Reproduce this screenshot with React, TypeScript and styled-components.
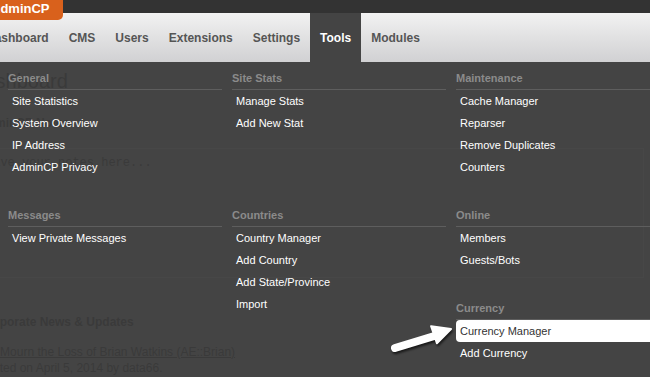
import React from 'react';
import styled, { createGlobalStyle } from 'styled-components';

interface MenuSection {
  title: string;
  links: string[];
}

const GlobalStyle = createGlobalStyle`
  html, body {
    margin: 0;
    padding: 0;
    overflow: hidden;
    background: #444;
  }
  body {
    font-family: "Liberation Sans", Arial, sans-serif;
  }
`;

const Page = styled.div`
  position: relative;
  width: 650px;
  height: 377px;
  overflow: hidden;
  background: #444;
`;

const TopBar = styled.div`
  display: flex;
  height: 13px;
  background: #333;
`;

const Brand = styled.div`
  position: relative;
  z-index: 2;
  align-self: flex-start;
  height: 20px;
  margin-left: -22px;
  padding: 0 13px;
  box-sizing: border-box;
  background: #d9611c;
  border-bottom-right-radius: 5px;
  color: #fff;
  font-size: 13px;
  font-weight: bold;
  line-height: 17px;
`;

const NavBar = styled.ul`
  display: flex;
  margin: 0 0 0 -24px;
  padding: 0;
  list-style: none;
  height: 49px;
  background: linear-gradient(to bottom, #f2f2f2 0%, #e1e1e2 50%, #d1d1d3 100%);
`;

const NavItem = styled.li<{ active?: boolean }>`
  padding: 0 10px;
  line-height: 50px;
  font-size: 12px;
  font-weight: bold;
  color: ${p => (p.active ? '#fff' : '#555')};
  background: ${p => (p.active ? '#444' : 'transparent')};
  white-space: nowrap;
`;

const Body = styled.div`
  position: relative;
  height: 315px;
`;

/* dashboard page that shows faintly through the open menu */
const Content = styled.div`
  margin-left: -21px;
  padding-top: 7px;
  color: #000;
`;

const PageTitle = styled.h1`
  margin: 0 0 0 -9px;
  font-size: 20px;
  font-weight: normal;
  line-height: 24px;
`;

const BlockTitle = styled.h3<{ gap: number }>`
  margin: ${p => p.gap}px 0 0;
  font-size: 12px;
  font-weight: bold;
  line-height: 16px;
  white-space: nowrap;
`;

const Notes = styled.textarea`
  display: block;
  box-sizing: border-box;
  margin-top: 17px;
  width: 665px;
  height: 130px;
  padding: 6px;
  border: 1px solid #5a5a5a;
  background: transparent;
  resize: none;
  font-family: "Liberation Mono", "Courier New", monospace;
  font-size: 12px;
  line-height: 16px;
  &::placeholder {
    color: #000;
  }
`;

const NewsLink = styled.a`
  display: block;
  margin-top: 14px;
  font-size: 12px;
  line-height: 16px;
  color: #000;
  text-decoration: underline;
  white-space: nowrap;
`;

const NewsMeta = styled.div`
  font-size: 12px;
  line-height: 16px;
  white-space: nowrap;
`;

const MegaMenu = styled.div`
  position: absolute;
  inset: 0;
  padding: 8px 0 0 8px;
  background: rgba(68, 68, 68, 0.85);
  display: grid;
  grid-template-columns: repeat(3, 214px);
  grid-auto-rows: min-content;
  align-content: start;
  column-gap: 10px;
`;

const Cell = styled.div`
  display: flex;
  flex-direction: column;
`;

const Section = styled.div`
  margin-bottom: 29px;
`;

const SectionTitle = styled.div`
  line-height: 16px;
  padding-bottom: 3px;
  border-bottom: 1px solid #5e5e5e;
  color: #8b8b8b;
  font-size: 11px;
  font-weight: bold;
`;

const LinkList = styled.ul`
  margin: 0;
  padding: 0;
  list-style: none;
`;

const LinkItem = styled.li<{ current?: boolean }>`
  padding: 0 4px;
  line-height: 22px;
  font-size: 11px;
  color: ${p => (p.current ? '#333' : '#fff')};
  background: ${p => (p.current ? '#fff' : 'transparent')};
  border-radius: 4px 0 0 4px;
  white-space: nowrap;
`;

const Pointer = styled.svg`
  position: absolute;
  left: 380px;
  top: 315px;
  width: 80px;
  height: 45px;
  pointer-events: none;
  filter: drop-shadow(1px 2px 1px rgba(0, 0, 0, 0.65));
`;

const navLinks = ['Dashboard', 'CMS', 'Users', 'Extensions', 'Settings', 'Tools', 'Modules'];

const columns: MenuSection[][] = [
  [{ title: 'General', links: ['Site Statistics', 'System Overview', 'IP Address', 'AdminCP Privacy'] }],
  [{ title: 'Site Stats', links: ['Manage Stats', 'Add New Stat'] }],
  [{ title: 'Maintenance', links: ['Cache Manager', 'Reparser', 'Remove Duplicates', 'Counters'] }],
  [{ title: 'Messages', links: ['View Private Messages'] }],
  [{ title: 'Countries', links: ['Country Manager', 'Add Country', 'Add State/Province', 'Import'] }],
  [
    { title: 'Online', links: ['Members', 'Guests/Bots'] },
    { title: 'Currency', links: ['Currency Manager', 'Add Currency'] },
  ],
];

const App: React.FC = () => {
  return (
    <Page>
      <GlobalStyle />
      <TopBar>
        <Brand>AdminCP</Brand>
      </TopBar>
      <NavBar>
        {navLinks.map(link => (
          <NavItem key={link} active={link === 'Tools'}>
            {link}
          </NavItem>
        ))}
      </NavBar>

      <Body>
        <Content>
          <PageTitle>Dashboard</PageTitle>
          <BlockTitle gap={22}>AdminCP Notes</BlockTitle>
          <Notes placeholder="Save your notes here..." />
          <BlockTitle gap={36}>Corporate News &amp; Updates</BlockTitle>
          <NewsLink>We Mourn the Loss of Brian Watkins (AE::Brian)</NewsLink>
          <NewsMeta>Posted on April 5, 2014 by data66.</NewsMeta>
        </Content>

        <MegaMenu>
          {columns.map((cell, i) => (
            <Cell key={i}>
              {cell.map(section => (
                <Section key={section.title}>
                  <SectionTitle>{section.title}</SectionTitle>
                  <LinkList>
                    {section.links.map(link => (
                      <LinkItem key={link} current={link === 'Currency Manager'}>
                        {link}
                      </LinkItem>
                    ))}
                  </LinkList>
                </Section>
              ))}
            </Cell>
          ))}
        </MegaMenu>
      </Body>

      <Pointer viewBox="380 315 80 45">
        <line x1="395" y1="348" x2="436" y2="335.5" stroke="#fff" strokeWidth="8" strokeLinecap="round" />
        <polygon
          points="451,329 436.9,343.3 431.1,326.3"
          fill="#fff"
          stroke="#fff"
          strokeWidth="2"
          strokeLinejoin="round"
        />
      </Pointer>
    </Page>
  );
};

export default App;
